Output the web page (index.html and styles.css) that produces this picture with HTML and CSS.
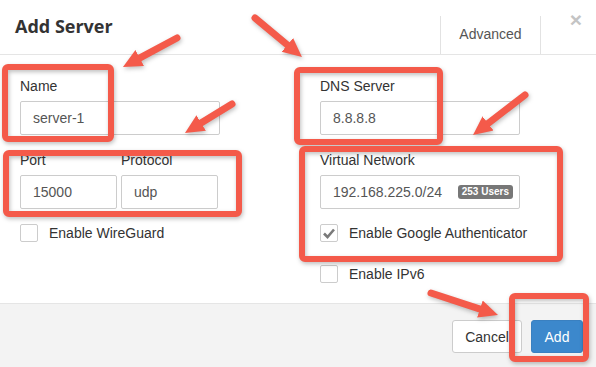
FILE: index.html
```html
<!DOCTYPE html>
<html lang="en">

<head>
    <meta charset="UTF-8" />
    <meta name="viewport" content="width=device-width" />
    <link rel="stylesheet" href="styles.css">
</head>

<body>
    <div class="modal">
        <div class="modal_header">
            <h4 class="modal_title">Add Server</h4>
            <div class="tab">Advanced</div>
            <span class="close">&times;</span>
        </div>

        <div class="modal_body">
            <div class="col">
                <div class="group">
                    <div class="label">Name</div>
                    <div class="field">server-1</div>
                </div>
                <div class="pair">
                    <div class="group">
                        <div class="label">Port</div>
                        <div class="field">15000</div>
                    </div>
                    <div class="group">
                        <div class="label">Protocol</div>
                        <div class="field">udp</div>
                    </div>
                </div>
                <div class="check">
                    <span class="box"></span>
                    <span>Enable WireGuard</span>
                </div>
            </div>

            <div class="col">
                <div class="group">
                    <div class="label">DNS Server</div>
                    <div class="field">8.8.8.8</div>
                </div>
                <div class="group">
                    <div class="label">Virtual Network</div>
                    <div class="field">
                        <span>192.168.225.0/24</span>
                        <span class="badge">253 Users</span>
                    </div>
                </div>
                <div class="check">
                    <span class="box">
                        <svg width="16" height="16" viewBox="0 0 16 16">
                            <path d="M3 8.5 L6.5 12 L13 4.5" fill="none" stroke="#7a7a7a" stroke-width="2.6" />
                        </svg>
                    </span>
                    <span>Enable Google Authenticator</span>
                </div>
                <div class="check">
                    <span class="box"></span>
                    <span>Enable IPv6</span>
                </div>
            </div>
        </div>

        <div class="modal_footer">
            <button class="btn btn_cancel">Cancel</button>
            <button class="btn btn_primary">Add</button>
        </div>

        <!-- red annotations drawn over the dialog -->
        <svg class="notes" width="596" height="367" viewBox="0 0 596 367">
            <defs>
                <marker id="head" markerUnits="userSpaceOnUse" markerWidth="20" markerHeight="20"
                    viewBox="0 0 20 20" refX="5" refY="10" orient="auto">
                    <path d="M0 1 L19 10 L0 19 z" fill="#f45a4a" />
                </marker>
            </defs>
            <g fill="none" stroke="#f45a4a" stroke-width="6">
                <rect x="5" y="67" width="106" height="72" rx="3" />
                <rect x="6" y="153" width="233" height="61" rx="3" />
                <rect x="297" y="70" width="143" height="72" rx="3" />
                <rect x="302" y="149" width="258" height="110" rx="3" />
                <rect x="512" y="296" width="74" height="63" rx="3" />
            </g>
            <g stroke="#f45a4a" stroke-width="7" stroke-linecap="round" marker-end="url(#head)">
                <line x1="177" y1="38" x2="135.3" y2="60.4" />
                <line x1="232" y1="104" x2="196.9" y2="125.6" />
                <line x1="255" y1="18" x2="291.2" y2="48.1" />
                <line x1="525" y1="95" x2="484.1" y2="126.5" />
                <line x1="431" y1="293" x2="484.7" y2="310.6" />
            </g>
        </svg>
    </div>
</body>

</html>
```

FILE: styles.css
```css
/* === add server dialog === */

body {
    margin: 0;
    background: #fff;
    font-family: "Liberation Sans", Arial, sans-serif;
    font-size: 14px;
    color: #333;
}

.modal {
    position: relative;
    width: 596px;
    height: 367px;
    overflow: hidden;
}

.modal_header {
    /* title, tab, close */
    display: flex;
    align-items: flex-start;
    height: 54px;
    padding-left: 15px;
    border-bottom: 1px solid #e5e5e5;
}

.modal_title {
    margin: 0;
    font-family: "Open Sans", sans-serif;
    font-weight: 700;
    font-size: 18px;
    line-height: 53px;
    color: #333;
}

.tab {
    margin-left: auto;
    margin-top: 16px;
    width: 101px;
    height: 38px;
    box-sizing: border-box;
    line-height: 37px;
    text-align: center;
    border-left: 1px solid #e2e2e2;
    border-right: 1px solid #e2e2e2;
    color: #555;
}

.close {
    width: 24px;
    margin-left: 23px;
    margin-right: 8px;
    padding-top: 10px;
    font-size: 21px;
    font-weight: 700;
    line-height: 20px;
    text-align: center;
    color: #c4c4c4;
}

.modal_body {
    /* two columns of fields */
    display: grid;
    grid-template-columns: 200px 200px;
    column-gap: 100px;
    height: 248px;
    box-sizing: border-box;
    padding: 21px 20px 0;
}

.group {
    margin-bottom: 15px;
}

.label {
    line-height: 20px;
    margin-bottom: 5px;
    color: #333;
}

.field {
    /* looks like an input */
    display: flex;
    align-items: center;
    height: 34px;
    box-sizing: border-box;
    padding: 0 6px 0 12px;
    border: 1px solid #ccc;
    border-radius: 2px;
    color: #555;
}

.pair {
    display: grid;
    grid-template-columns: 97px 97px;
    column-gap: 4px;
}

.badge {
    margin-left: auto;
    height: 14px;
    line-height: 14px;
    padding: 0 4px;
    border-radius: 3px;
    background: #777;
    color: #fff;
    font-size: 10px;
    font-weight: 700;
}

.check {
    display: flex;
    align-items: center;
    height: 18px;
    margin-bottom: 23px;
    white-space: nowrap;
}

.box {
    display: flex;
    flex-shrink: 0;
    align-items: center;
    justify-content: center;
    width: 18px;
    height: 18px;
    box-sizing: border-box;
    border: 1px solid #ccc;
    border-radius: 2px;
    margin-right: 11px;
}

.modal_footer {
    display: flex;
    justify-content: flex-end;
    gap: 9px;
    height: 64px;
    box-sizing: border-box;
    padding: 16px 13px 0;
    border-top: 1px solid #e5e5e5;
    background: #f3f3f3;
}

.btn {
    height: 33px;
    padding: 0;
    border: 1px solid #ccc;
    border-radius: 3px;
    background: #fff;
    color: #333;
    font-family: "Liberation Sans", Arial, sans-serif;
    font-size: 14px;
}

.btn_cancel {
    width: 70px;
}

.btn_primary {
    width: 52px;
    border-color: #3a80c0;
    background: #3c88cc;
    color: #fff;
}

.notes {
    /* annotation layer over the dialog */
    position: absolute;
    left: 0;
    top: 0;
    pointer-events: none;
    filter: drop-shadow(1px 2px 2px rgba(0, 0, 0, 0.25));
}
```
